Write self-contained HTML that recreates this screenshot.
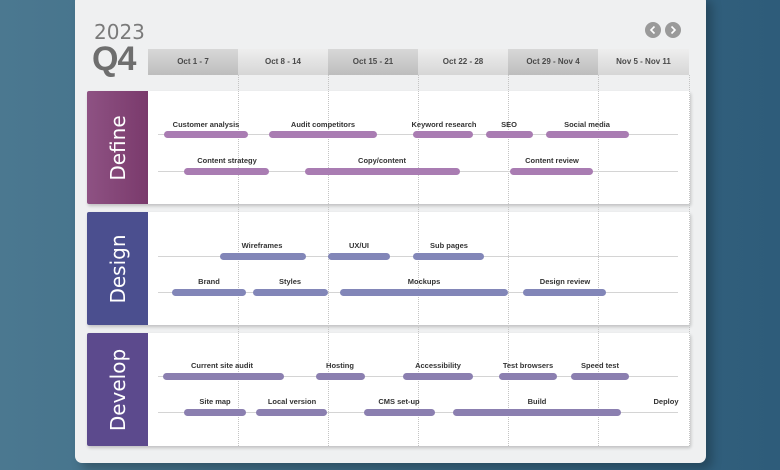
<!DOCTYPE html>
<html><head><meta charset="utf-8"><style>
*{margin:0;padding:0;box-sizing:border-box}
body{width:780px;height:470px;overflow:hidden;position:relative;font-family:"Liberation Sans",sans-serif;background:linear-gradient(90deg,#4b7890 0%,#3e6c86 40%,#2e5c7a 100%)}
.card{position:absolute;left:75px;top:-6px;width:631px;height:469px;background:#eff0f1;border-radius:7px;box-shadow:6px 6px 10px rgba(0,0,0,.25)}
.abs{position:absolute}
.hdr{position:absolute;top:49px;height:26px;width:90px;font-size:8px;font-weight:bold;color:#4a4a4a;text-align:center;line-height:26px}
.hd{background:linear-gradient(#d8d8d8,#bdbdbd)}
.hl{background:linear-gradient(#eeeeee,#d6d6d6)}
.vl{position:absolute;top:75px;height:371px;border-left:1px dotted #c4c4c4;width:0}
.sec{position:absolute;left:87px;width:603px;height:113px;background:#fff;box-shadow:1px 2px 3px rgba(0,0,0,.2);border-radius:2px}
.lab{position:absolute;left:87px;width:61px;height:113px;border-radius:2px 0 0 2px}
.lab span{position:absolute;left:50%;top:50%;transform:translate(-50%,-50%) rotate(-90deg);color:#fff;font-size:20px;white-space:nowrap;font-family:"DejaVu Sans",sans-serif}
.ln{position:absolute;height:1px;background:#d4d4d4}
.b{position:absolute;height:7px;border-radius:4px}
.t{position:absolute;font-size:7.5px;font-weight:bold;color:#333;white-space:nowrap;transform:translateX(-50%)}
.btn{position:absolute;top:22px;width:16px;height:16px;border-radius:50%;background:#9a9a9a}
</style></head><body>
<div class="card"></div>
<div class="abs" style="left:94px;top:20px;font-size:20px;color:#7a7a7a;font-family:'DejaVu Sans',sans-serif">2023</div>
<div class="abs" style="left:92px;top:40px;font-size:34px;color:#6e6e6e;font-weight:bold;letter-spacing:-1px">Q4</div>
<div class="btn" style="left:645px"><svg width="16" height="16"><path d="M9.5 4.5L6 8l3.5 3.5" stroke="#fff" stroke-width="1.6" fill="none"/></svg></div>
<div class="btn" style="left:665px"><svg width="16" height="16"><path d="M6.5 4.5L10 8l-3.5 3.5" stroke="#fff" stroke-width="1.6" fill="none"/></svg></div>
<div class="hdr hd" style="left:148px">Oct 1 - 7</div>
<div class="hdr hl" style="left:238px">Oct 8 - 14</div>
<div class="hdr hd" style="left:328px">Oct 15 - 21</div>
<div class="hdr hl" style="left:418px">Oct 22 - 28</div>
<div class="hdr hd" style="left:508px">Oct 29 - Nov 4</div>
<div class="hdr hl" style="left:598px;width:91px">Nov 5 - Nov 11</div>

<div class="sec" style="top:91px"></div>
<div class="sec" style="top:212px"></div>
<div class="sec" style="top:333px"></div>
<div class="vl" style="left:238px"></div><div class="vl" style="left:328px"></div><div class="vl" style="left:418px"></div><div class="vl" style="left:508px"></div><div class="vl" style="left:598px"></div><div class="vl" style="left:689px"></div>
<div class="lab" style="top:91px;background:linear-gradient(90deg,#8e5283,#7a3a6c)"><span>Define</span></div>
<div class="lab" style="top:212px;background:#4b4f8f"><span>Design</span></div>
<div class="lab" style="top:333px;background:#5c4a8d"><span>Develop</span></div>

<div class="ln" style="left:158px;width:520px;top:134px"></div>
<div class="ln" style="left:158px;width:520px;top:171px"></div>
<div class="ln" style="left:158px;width:520px;top:256px"></div>
<div class="ln" style="left:158px;width:520px;top:292px"></div>
<div class="ln" style="left:158px;width:520px;top:376px"></div>
<div class="ln" style="left:158px;width:520px;top:412px"></div>

<div class="b" style="background:#a97cb2;left:164px;width:84px;top:131px"></div><div class="t" style="left:206px;top:120px">Customer analysis</div>
<div class="b" style="background:#a97cb2;left:269px;width:108px;top:131px"></div><div class="t" style="left:323px;top:120px">Audit competitors</div>
<div class="b" style="background:#a97cb2;left:413px;width:60px;top:131px"></div><div class="t" style="left:444px;top:120px">Keyword research</div>
<div class="b" style="background:#a97cb2;left:486px;width:47px;top:131px"></div><div class="t" style="left:509px;top:120px">SEO</div>
<div class="b" style="background:#a97cb2;left:546px;width:83px;top:131px"></div><div class="t" style="left:587px;top:120px">Social media</div>
<div class="b" style="background:#a97cb2;left:184px;width:85px;top:168px"></div><div class="t" style="left:227px;top:156px">Content strategy</div>
<div class="b" style="background:#a97cb2;left:305px;width:155px;top:168px"></div><div class="t" style="left:382px;top:156px">Copy/content</div>
<div class="b" style="background:#a97cb2;left:510px;width:83px;top:168px"></div><div class="t" style="left:552px;top:156px">Content review</div>
<div class="b" style="background:#8286b8;left:220px;width:86px;top:253px"></div><div class="t" style="left:262px;top:241px">Wireframes</div>
<div class="b" style="background:#8286b8;left:328px;width:62px;top:253px"></div><div class="t" style="left:359px;top:241px">UX/UI</div>
<div class="b" style="background:#8286b8;left:413px;width:71px;top:253px"></div><div class="t" style="left:449px;top:241px">Sub pages</div>
<div class="b" style="background:#8286b8;left:172px;width:74px;top:289px"></div><div class="t" style="left:209px;top:277px">Brand</div>
<div class="b" style="background:#8286b8;left:253px;width:75px;top:289px"></div><div class="t" style="left:290px;top:277px">Styles</div>
<div class="b" style="background:#8286b8;left:340px;width:168px;top:289px"></div><div class="t" style="left:424px;top:277px">Mockups</div>
<div class="b" style="background:#8286b8;left:523px;width:83px;top:289px"></div><div class="t" style="left:565px;top:277px">Design review</div>
<div class="b" style="background:#8b7fb0;left:163px;width:121px;top:373px"></div><div class="t" style="left:222px;top:361px">Current site audit</div>
<div class="b" style="background:#8b7fb0;left:316px;width:49px;top:373px"></div><div class="t" style="left:340px;top:361px">Hosting</div>
<div class="b" style="background:#8b7fb0;left:403px;width:70px;top:373px"></div><div class="t" style="left:438px;top:361px">Accessibility</div>
<div class="b" style="background:#8b7fb0;left:499px;width:58px;top:373px"></div><div class="t" style="left:528px;top:361px">Test browsers</div>
<div class="b" style="background:#8b7fb0;left:571px;width:58px;top:373px"></div><div class="t" style="left:600px;top:361px">Speed test</div>
<div class="b" style="background:#8b7fb0;left:184px;width:62px;top:409px"></div><div class="t" style="left:215px;top:397px">Site map</div>
<div class="b" style="background:#8b7fb0;left:256px;width:71px;top:409px"></div><div class="t" style="left:292px;top:397px">Local version</div>
<div class="b" style="background:#8b7fb0;left:364px;width:71px;top:409px"></div><div class="t" style="left:399px;top:397px">CMS set-up</div>
<div class="b" style="background:#8b7fb0;left:453px;width:168px;top:409px"></div><div class="t" style="left:537px;top:397px">Build</div>
<div class="t" style="left:666px;top:397px">Deploy</div>
</body></html>
